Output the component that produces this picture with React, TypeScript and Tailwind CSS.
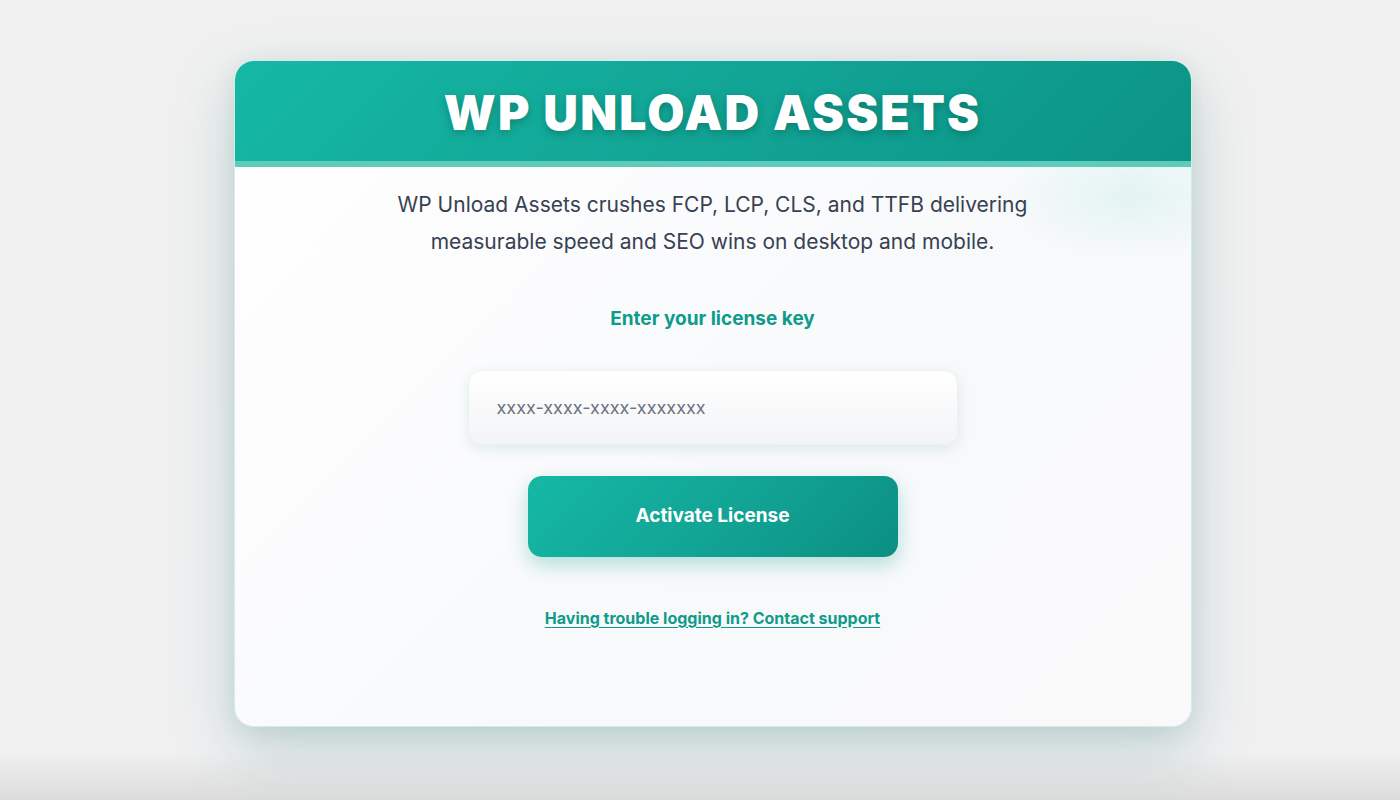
import React from "react";

export default function App() {
  return (
    <main className="min-h-screen h-[800px] bg-[linear-gradient(to_bottom,#f0f0f0_0%,#f0f0f1_94%,#dcdcdc_100%)] flex justify-center pt-[60px] pl-[25px] font-['Inter',sans-serif]">
      <div className="relative w-[958px] h-[667px] rounded-[20px] overflow-hidden border border-[#d3ece8] bg-[linear-gradient(135deg,#ffffff_0%,#f8f9fb_60%,#f9f9fa_100%)] shadow-[0_24px_60px_rgba(80,140,135,0.28),0_4px_20px_rgba(80,140,135,0.12)]">
        <div className="absolute right-[-70px] top-[70px] w-[260px] h-[130px] rounded-full bg-[radial-gradient(closest-side,rgba(200,238,232,0.45),rgba(255,255,255,0))]" />

        <header className="relative z-10 h-[106px] bg-[linear-gradient(135deg,#15b8a5_0%,#12a596_50%,#0b9486_100%)] flex items-center justify-center border-b-[6px] border-[#5ecbbb]">
          <h1 className="text-white text-[48px] font-black tracking-[0.045em] leading-none pt-1 [text-shadow:0_3px_8px_rgba(0,60,50,0.35)]">
            WP UNLOAD ASSETS
          </h1>
        </header>

        <div className="relative flex flex-col items-center pt-[19px]">
          <p className="text-center text-[21px] leading-[37px] text-[#374151] max-w-[680px]">
            WP Unload Assets crushes FCP, LCP, CLS, and TTFB delivering
            <br />
            measurable speed and SEO wins on desktop and mobile.
          </p>

          <label className="mt-[45px] text-[19px] font-bold text-[#0f9b8a]">
            Enter your license key
          </label>

          <input
            type="text"
            placeholder="xxxx-xxxx-xxxx-xxxxxxx"
            className="mt-[36px] w-[490px] h-[75px] rounded-[14px] px-[28px] text-[18px] text-[#374151] placeholder:text-[#6b7280] bg-[linear-gradient(to_bottom,#ffffff,#f3f4f6)] border border-[#eef0f2] shadow-[0_4px_14px_rgba(60,140,130,0.14)] outline-none"
          />

          <button className="mt-[31px] w-[370px] h-[81px] rounded-[14px] text-white text-[19px] font-bold bg-[linear-gradient(135deg,#15b8a5_0%,#12a596_50%,#0b8f82_100%)] shadow-[0_8px_20px_rgba(20,160,140,0.3)]">
            Activate License
          </button>

          <a
            href="#"
            className="mt-[49px] text-[16px] font-bold text-[#0f9b8a] underline underline-offset-[3px]"
          >
            Having trouble logging in? Contact support
          </a>
        </div>
      </div>
    </main>
  );
}
